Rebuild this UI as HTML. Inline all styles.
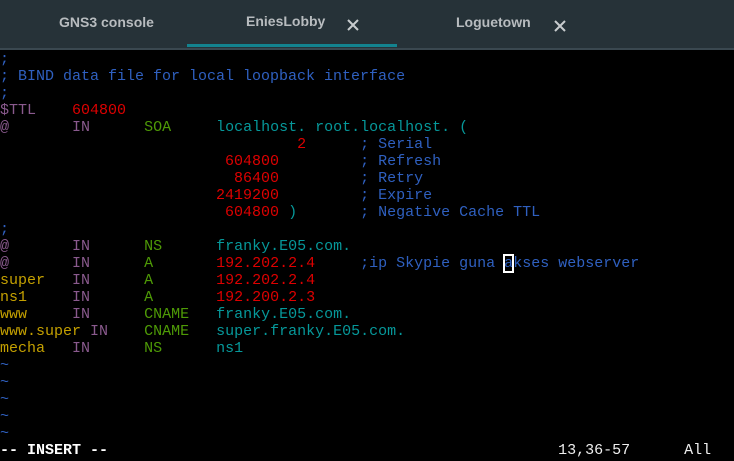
<!DOCTYPE html>
<html><head><style>
body{margin:0;width:734px;height:461px;background:#000;overflow:hidden;font-family:"Liberation Sans",sans-serif}
.bar{position:absolute;left:0;top:0;width:734px;height:48px;background:#263238;border-bottom:2px solid #3a4850}
.tab{position:absolute;top:14px;font-size:14px;font-weight:bold;color:#b8bcbf}
.x{position:absolute;top:14px;width:14px;height:14px}
.ul{position:absolute;left:187px;top:44px;width:210px;height:3px;background:#13838f}
pre{position:absolute;left:0;top:51px;margin:0;font-family:"Liberation Mono",monospace;font-size:15px;line-height:17px;color:#ccc}
.b{color:#2f60c0}.r{color:#d00}.p{color:#8a5a8e}.g{color:#4e9a06}.c{color:#06989a}.y{color:#c4a000}.w{color:#fff;font-weight:bold}
.cur{outline:2px solid #fff;outline-offset:-1px}
</style></head><body>
<div class="bar">
<div class="tab" style="left:59px">GNS3 console</div>
<div class="tab" style="left:246px;top:13px">EniesLobby</div>
<svg class="x" style="left:346px;top:18px" viewBox="0 0 14 14"><path d="M2 2L12 12M12 2L2 12" stroke="#c8ccce" stroke-width="2"/></svg>
<div class="tab" style="left:456px">Loguetown</div>
<svg class="x" style="left:553px;top:19px" viewBox="0 0 14 14"><path d="M2 2L12 12M12 2L2 12" stroke="#c8ccce" stroke-width="2"/></svg>
<div class="ul"></div>
</div>
<pre><span class="b">;
; BIND data file for local loopback interface
;</span>
<span class="p">$TTL</span>    <span class="r">604800</span>
<span class="p">@</span>       <span class="p">IN</span>      <span class="g">SOA</span>     <span class="c">localhost. root.localhost. (</span>
                                 <span class="r">2</span>      <span class="b">; Serial</span>
                         <span class="r">604800</span>         <span class="b">; Refresh</span>
                          <span class="r">86400</span>         <span class="b">; Retry</span>
                        <span class="r">2419200</span>         <span class="b">; Expire</span>
                         <span class="r">604800</span> <span class="c">)</span>       <span class="b">; Negative Cache TTL</span>
<span class="b">;</span>
<span class="p">@</span>       <span class="p">IN</span>      <span class="g">NS</span>      <span class="c">franky.E05.com.</span>
<span class="p">@</span>       <span class="p">IN</span>      <span class="g">A</span>       <span class="r">192.202.2.4</span>     <span class="b">;ip Skypie guna <span class="cur">a</span>kses webserver</span>
<span class="y">super</span>   <span class="p">IN</span>      <span class="g">A</span>       <span class="r">192.202.2.4</span>
<span class="y">ns1</span>     <span class="p">IN</span>      <span class="g">A</span>       <span class="r">192.200.2.3</span>
<span class="y">www</span>     <span class="p">IN</span>      <span class="g">CNAME</span>   <span class="c">franky.E05.com.</span>
<span class="y">www.super</span> <span class="p">IN</span>    <span class="g">CNAME</span>   <span class="c">super.franky.E05.com.</span>
<span class="y">mecha</span>   <span class="p">IN</span>      <span class="g">NS</span>      <span class="c">ns1</span>
<span class="b">~
~
~
~
~</span>
<span class="w">-- INSERT --</span>                                                  <span style="color:#eee">13,36-57      All</span></pre>
</body></html>
